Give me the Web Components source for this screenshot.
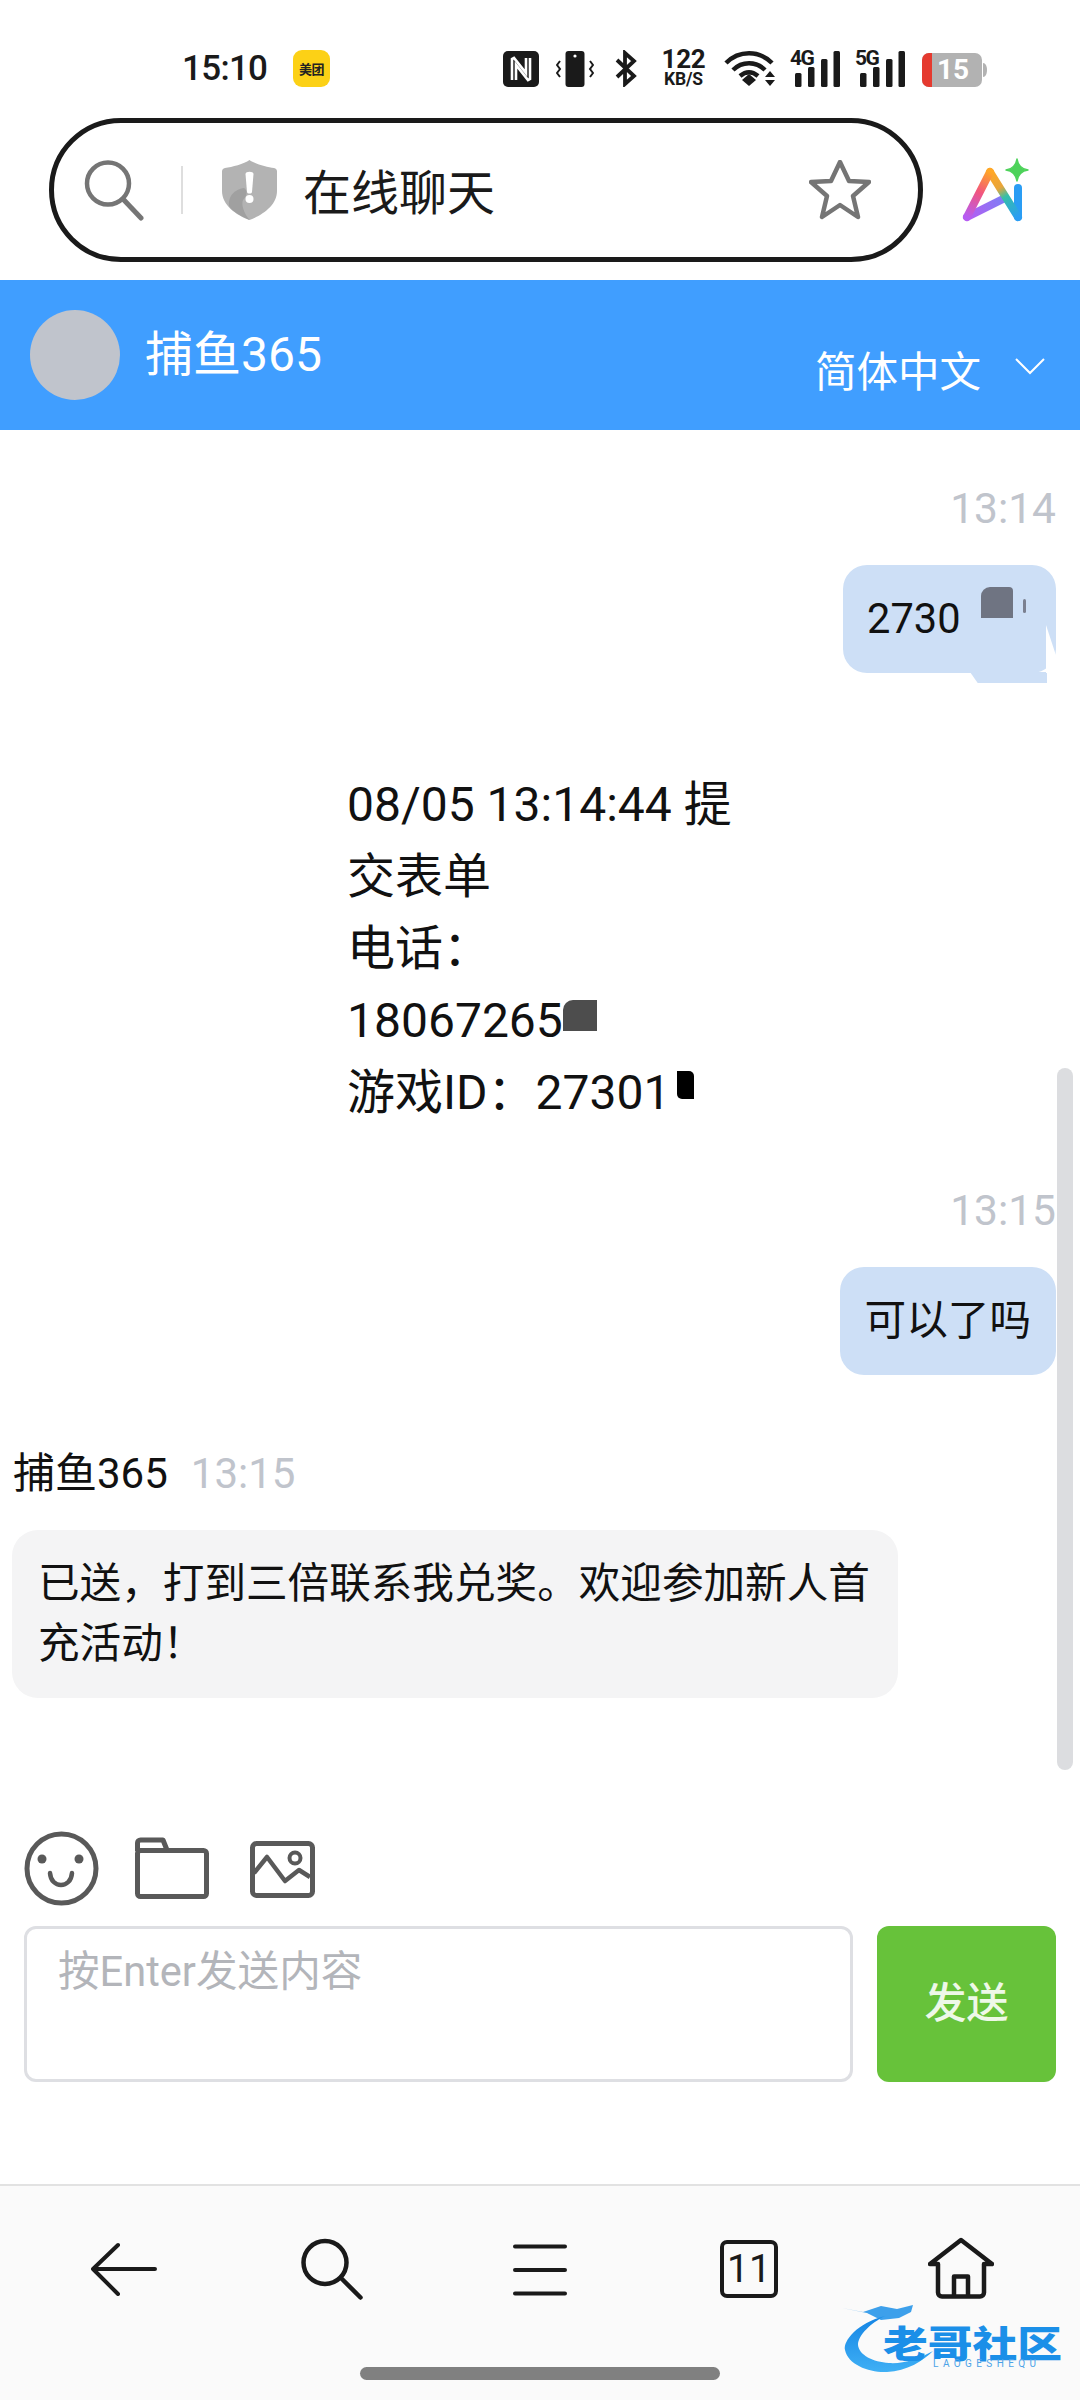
<!DOCTYPE html>
<html lang="zh">
<head>
<meta charset="utf-8">
<title>在线聊天</title>
<style>
  html, body { margin: 0; background: #fff; }
  body { width: 1080px; height: 2400px; overflow: hidden; display: flex; flex-direction: column;
         font-family: Roboto, "Noto Sans CJK SC", sans-serif; color: #111; }
</style>
</head>
<body>
<status-bar></status-bar>
<url-bar></url-bar>
<chat-header></chat-header>
<chat-log>
  <chat-time>13:14</chat-time>
  <chat-bubble side="me" redact="first">2730</chat-bubble>
  <form-note></form-note>
  <chat-time gap="58">13:15</chat-time>
  <chat-bubble side="me">可以了吗</chat-bubble>
  <chat-sender name="捕鱼365" time="13:15"></chat-sender>
  <chat-bubble side="them">已送，打到三倍联系我兑奖。欢迎参加新人首充活动！</chat-bubble>
</chat-log>
<chat-composer></chat-composer>
<bottom-nav></bottom-nav>

<script>
/* ---------- status bar ---------- */
const SIGNAL_BARS = `<svg width="50" height="37" viewBox="0 0 50 37">
  <rect x="5" y="23" width="6.5" height="14" rx="1.5" fill="#1a1a1a"/><rect x="18" y="17" width="6.5" height="20" rx="1.5" fill="#1a1a1a"/>
  <rect x="31" y="9" width="6.5" height="28" rx="1.5" fill="#1a1a1a"/><rect x="43.5" y="1" width="6.5" height="36" rx="1.5" fill="#1a1a1a"/></svg>`;

class StatusBar extends HTMLElement {
    constructor() {
        super();
        this.attachShadow({ mode: 'open' }).innerHTML = `
      <style>
        :host{display:flex;height:118px;box-sizing:border-box;padding:50px 0 0 182px;align-items:flex-start;color:#1a1a1a}
        .clock{font:500 35px/37px Roboto,sans-serif;width:111px;letter-spacing:-.7px}
        .mt{width:37px;height:37px;border-radius:9px;background:#fcd116;display:flex;align-items:center;justify-content:center;
            font:700 13px/1 "Noto Sans CJK SC",sans-serif;color:#222;letter-spacing:-.5px}
        .right{margin-left:173px;display:flex;align-items:flex-start;height:37px}
        svg{display:block}
        .net{width:45px;margin:0 18px 0 24px;text-align:center}
        .net b{display:block;font:700 26px/21px Roboto,sans-serif;letter-spacing:-.3px;margin-top:-1px}
        .net i{display:block;font:700 17.5px/17px Roboto,sans-serif;font-style:normal;white-space:nowrap;letter-spacing:-.2px;margin-top:1px}
        .sig{position:relative;width:50px;height:37px}
        .sig span{position:absolute;left:0;top:-2px;font:700 21px/20px Roboto,sans-serif;letter-spacing:-1.5px}
        .sig svg{position:absolute;left:0;top:0}
        .batt{position:relative;width:65px;height:37px;margin-left:17px}
        .batt span{position:absolute;left:13px;top:5px;width:36px;text-align:center;font:700 28px/30px Roboto,sans-serif;color:#fff}
      </style>
      <div class="clock">15:10</div>
      <div class="mt">美团</div>
      <div class="right">
        <svg width="36" height="37" viewBox="0 0 36 37"><rect width="36" height="36" y="1" rx="5" fill="#1a1a1a"/><path d="M9 30V9l2-1 12 15V8M27 8v21l-2 1-12-15v15" fill="none" stroke="#fff" stroke-width="2.6"/></svg>
        <svg width="38" height="37" viewBox="0 0 38 37" style="margin-left:17px"><rect x="9.500" y="1" width="19" height="36" rx="3" fill="#1a1a1a"/><circle cx="19" cy="6" r="1.6" fill="#fff"/><path d="M4 11 1 15l3 4-3 4 3 4M34 11l3 4-3 4 3 4-3 4" fill="none" stroke="#1a1a1a" stroke-width="2"/></svg>
        <svg width="22" height="37" viewBox="0 0 22 37" style="margin-left:21px"><path d="M2 10 19 26 10 34V3l9 8L2 27" fill="none" stroke="#1a1a1a" stroke-width="3.8"/></svg>
        <div class="net"><b>122</b><i>KB/S</i></div>
        <svg width="52" height="37" viewBox="0 0 52 37"><path d="M2 13C15 0 35 0 48 13M9 20C18 11 32 11 41 20M16 26c6-5 12-5 18 0" fill="none" stroke="#1a1a1a" stroke-width="4.500"/><path d="M18 30 25 24 32 30 25 36z" fill="#1a1a1a"/><path d="M41 27l5-6 5 6zM41 30h10l-5 6z" fill="#1a1a1a"/></svg>
        <div class="sig" style="margin-left:14px"><span>4G</span>${SIGNAL_BARS}</div>
        <div class="sig" style="margin-left:15px"><span>5G</span>${SIGNAL_BARS}</div>
        <div class="batt"><svg width="65" height="37" viewBox="0 0 65 37"><rect y="3" width="60" height="34" rx="7" fill="#b2b2b2"/><path d="M7 3h3v34H7a7 7 0 0 1-7-7V10a7 7 0 0 1 7-7z" fill="#e53a2f"/><path d="M61 13c2.500 0 4 3 4 7s-1.500 7-4 7z" fill="#b2b2b2"/></svg><span>15</span></div>
      </div>
    `;
    }
}
customElements.define('status-bar', StatusBar);

/* ---------- browser address bar ---------- */
class UrlBar extends HTMLElement {
    constructor() {
        super();
        this.attachShadow({ mode: 'open' }).innerHTML = `
      <style>
        :host{display:flex;align-items:flex-start;height:162px;padding-left:49px;box-sizing:border-box}
        .pill{width:874px;height:144px;box-sizing:border-box;border:5px solid #1a1a1a;border-radius:72px;
              display:flex;align-items:center;padding:0 0 0 30px}
        .sep{width:2px;height:48px;background:#dedede;margin:0 39px 0 37px}
        .title{font:400 48px/1 "Noto Sans CJK SC",sans-serif;color:#1a1a1a;margin:0 0 3px 26px;flex:1}
        svg{display:block}
        .star{margin-right:47px}
        .ai{margin:40px 0 0 38px}
      </style>
      <div class="pill">
        <svg width="60" height="62" viewBox="0 0 60 62"><circle cx="24" cy="24.500" r="21" fill="none" stroke="#757575" stroke-width="4.500"/><path d="M39 40 57 59" stroke="#757575" stroke-width="5" stroke-linecap="round"/></svg>
        <div class="sep"></div>
        <svg width="55" height="62" viewBox="0 0 55 62"><path d="M27.500 1C33 5 45 8 52 9c2 .4 3 1.500 3 3.500V32c0 14-14 24-27.500 29C14 56 0 46 0 32V12.500C0 10.500 1 9.400 3 9c7-1 19-4 24.500-8z" fill="#b3b3b3"/><path d="M7 47c-1-12 8-17 15-18 4 2 3 8-1 12-2 5 1 13 6.500 20C19 57 11 53 7 47z" fill="#a0a0a0"/><path d="M23.500 15c0-3 8-3 8 0l-1.500 18c-.3 2-4.700 2-5 0z" fill="#fff"/><circle cx="27.500" cy="40" r="4" fill="#fff"/></svg>
        <div class="title">在线聊天</div>
        <svg class="star" width="62" height="60" viewBox="0 0 62 60"><path d="M31 2 40 21 60 22 44 36 49 57 31 45 13 57 18 36 2 22 22 21z" fill="none" stroke="#757575" stroke-width="4.500" stroke-linejoin="round"/></svg>
      </div>
      <svg class="ai" width="70" height="68" viewBox="0 0 70 68">
        <defs>
          <linearGradient id="leg" gradientUnits="userSpaceOnUse" x1="29" y1="14" x2="6" y2="59"><stop offset="0" stop-color="#ffa726"/><stop offset=".45" stop-color="#f2557e"/><stop offset="1" stop-color="#b65cf2"/></linearGradient>
          <linearGradient id="bar" gradientUnits="userSpaceOnUse" x1="6" y1="59" x2="42" y2="41"><stop offset="0" stop-color="#b65cf2"/><stop offset="1" stop-color="#7f7df5"/></linearGradient>
          <linearGradient id="diag" gradientUnits="userSpaceOnUse" x1="29" y1="14" x2="57" y2="59"><stop offset="0" stop-color="#ffa726"/><stop offset=".35" stop-color="#e8a53a"/><stop offset=".55" stop-color="#35bfa8"/><stop offset="1" stop-color="#2a9df4"/></linearGradient>
        </defs>
        <path d="M6 59 42 41" fill="none" stroke="url(#bar)" stroke-width="8" stroke-linecap="round"/>
        <path d="M57 30V59" fill="none" stroke="#2a9df4" stroke-width="8" stroke-linecap="round"/>
        <path d="M29 14 57 59" fill="none" stroke="url(#diag)" stroke-width="8" stroke-linecap="round"/>
        <path d="M29 14 6 59" fill="none" stroke="url(#leg)" stroke-width="8" stroke-linecap="round"/>
        <path d="M56 1c1 6 4 10 11 11-7 1-10 5-11 11-1-6-4-10-11-11 7-1 10-5 11-11z" fill="#4dd25a" stroke="#4dd25a" stroke-width="1.500" stroke-linejoin="round"/>
      </svg>
    `;
    }
}
customElements.define('url-bar', UrlBar);

/* ---------- blue chat header ---------- */
class ChatHeader extends HTMLElement {
    constructor() {
        super();
        this.attachShadow({ mode: 'open' }).innerHTML = `
      <style>
        :host{display:flex;align-items:center;height:150px;background:#409eff;color:#fff;padding:0 35px 0 30px;box-sizing:border-box}
        .av{width:90px;height:90px;border-radius:50%;background:#c0c4cc}
        .name{font:400 48px/60px Roboto,"Noto Sans CJK SC",sans-serif;margin-left:25px;flex:1}
        .lang{display:flex;align-items:center;margin-top:28px;font:400 41.500px/56px "Noto Sans CJK SC",sans-serif}
        svg{display:block;margin-left:34px;margin-bottom:6px}
      </style>
      <div class="av"></div>
      <div class="name">捕鱼365</div>
      <div class="lang">简体中文<svg width="30" height="17" viewBox="0 0 30 17"><path d="M1 1 15 15 29 1" fill="none" stroke="#fff" stroke-width="2"/></svg></div>
    `;
    }
}
customElements.define('chat-header', ChatHeader);

/* ---------- scrolling message list ---------- */
class ChatLog extends HTMLElement {
    constructor() {
        super();
        this.attachShadow({ mode: 'open' }).innerHTML = `
      <style>
        :host{display:flex;flex-direction:column;position:relative;height:1370px;box-sizing:border-box;padding-top:55px;overflow:hidden}
        /* scroll thumb sits over the list */
        .thumb{position:absolute;left:1057px;top:638px;width:16px;height:702px;border-radius:8px;background:#dcdde0}
      </style>
      <slot></slot>
      <div class="thumb"></div>
    `;
    }
}
customElements.define('chat-log', ChatLog);

class ChatTime extends HTMLElement {
    constructor() {
        super();
        this.attachShadow({ mode: 'open' }).innerHTML = `
      <style>
        :host{display:block;text-align:right;padding-right:24px;font:400 42.500px/48px Roboto,sans-serif;color:#c0c4cc}
      </style>
      <slot></slot>
    `;
    }
    connectedCallback() {
        const gap = this.getAttribute('gap');
        if (gap) this.style.marginTop = gap + 'px';
    }
}
customElements.define('chat-time', ChatTime);

class ChatBubble extends HTMLElement {
    constructor() {
        super();
        this.attachShadow({ mode: 'open' }).innerHTML = `
      <style>
        :host{display:flex;font:400 41.600px/60px Roboto,"Noto Sans CJK SC",sans-serif;color:#111}
        :host([side=me]){justify-content:flex-end;padding-right:24px;margin-top:32px}
        :host([side=them]){padding-left:12px;margin-top:32px}
        .b{position:relative;box-sizing:border-box;padding:24px 25px;border-radius:24px}
        :host([side=me]) .b{background:#cddff6}
        :host([side=them]) .b{background:#f4f4f5;width:886px;border-radius:26px;padding:24px 26px}
        :host([redact]) .b{width:213px;padding-left:24px}
        i{display:none;position:absolute}
        /* retouched patches on the first bubble */
        :host([redact]) i{display:block}
        .smear{left:127px;top:107px;width:77px;height:11px;background:#cddff6;clip-path:polygon(0 0,100% 0,100% 100%,10% 100%)}
        .wedge{left:203px;top:60px;width:11px;height:48px;background:#fff;clip-path:polygon(0 0,100% 70%,100% 100%,0 100%)}
        .blot{left:138px;top:22px;width:32px;height:31px;background:#6f7482;border-radius:9px 4px 0 0}
        .speck{left:180px;top:34px;width:3px;height:14px;background:#7b8090;border-radius:2px}
      </style>
      <div class="b"><slot></slot><i class="smear"></i><i class="wedge"></i><i class="blot"></i><i class="speck"></i></div>
    `;
    }
}
customElements.define('chat-bubble', ChatBubble);

/* ---------- submitted form text ---------- */
class FormNote extends HTMLElement {
    constructor() {
        super();
        this.attachShadow({ mode: 'open' }).innerHTML = `
      <style>
        :host{display:block;width:400px;margin:96px 0 0 347px;font:400 48px/72px Roboto,"Noto Sans CJK SC",sans-serif;color:#111}
        .r{position:relative}
        .a{position:absolute;left:100%;top:8px;margin-left:0;width:34px;height:31px;background:#4d4d4d;border-radius:10px 0 0 0}
        .c{position:absolute;left:100%;top:7px;margin-left:7px;width:17px;height:28px;background:#000;border-radius:0 5px 0 5px}
      </style>
      08/05 13:14:44 提交表单<br>电话：<br><span class="r">18067265<i class="a"></i></span><br>游戏ID：<span class="r">27301<i class="c"></i></span>
    `;
    }
}
customElements.define('form-note', FormNote);

class ChatSender extends HTMLElement {
    constructor() {
        super();
        this.attachShadow({ mode: 'open' }).innerHTML = `
      <style>
        :host{display:flex;margin:75px 0 0 13px;font:400 42px/48px Roboto,"Noto Sans CJK SC",sans-serif;color:#111}
        .t{margin-left:23px;color:#c0c4cc}
      </style>
      <span id="n"></span><span class="t" id="t"></span>
    `;
    }
    connectedCallback() {
        this.shadowRoot.getElementById('n').textContent = this.getAttribute('name');
        this.shadowRoot.getElementById('t').textContent = this.getAttribute('time');
    }
}
customElements.define('chat-sender', ChatSender);

/* ---------- composer ---------- */
class ChatComposer extends HTMLElement {
    constructor() {
        super();
        this.attachShadow({ mode: 'open' }).innerHTML = `
      <style>
        :host{display:block;height:384px;box-sizing:border-box;padding:32px 24px 0 24px}
        .tools{display:flex;align-items:center;height:73px;gap:35px}
        svg{display:block}
        .row{display:flex;gap:24px;margin-top:21px;height:156px}
        .box{flex:1;box-sizing:border-box;border:3px solid #dedfe3;border-radius:12px;padding:15px 31px;
             font:400 41.600px/56px Roboto,"Noto Sans CJK SC",sans-serif;color:#b3b5ba}
        .send{width:179px;box-sizing:border-box;padding-bottom:8px;border-radius:12px;background:#67c23a;color:#eef8e8;display:flex;align-items:center;justify-content:center;
              font:500 42px/1 "Noto Sans CJK SC",sans-serif}
      </style>
      <div class="tools">
        <svg width="75" height="75" viewBox="0 0 75 75"><circle cx="37.500" cy="37.500" r="34.500" fill="none" stroke="#595959" stroke-width="5"/><circle cx="18" cy="28" r="4.500" fill="#595959"/><circle cx="55" cy="28" r="4.500" fill="#595959"/><path d="M26 42c1 16 21 16 22 0" fill="none" stroke="#595959" stroke-width="4.500" stroke-linecap="round"/></svg>
        <svg width="75" height="63" viewBox="0 0 75 63"><rect x="3.500" y="13.500" width="69" height="46" rx="3" fill="none" stroke="#595959" stroke-width="5"/><path d="M3.500 14V6a3 3 0 0 1 3-3H29l4 10" fill="none" stroke="#595959" stroke-width="5" stroke-linejoin="round"/></svg>
        <svg width="66" height="58" viewBox="0 0 66 58" style="margin-left:5px"><rect x="3.500" y="3.500" width="60" height="52" rx="4" fill="none" stroke="#595959" stroke-width="5"/><path d="M5 33 18 17 36 41 50 30 61 37" fill="none" stroke="#595959" stroke-width="4.500" stroke-linejoin="round"/><circle cx="46" cy="18" r="5.500" fill="none" stroke="#595959" stroke-width="4"/></svg>
      </div>
      <div class="row">
        <div class="box">按Enter发送内容</div>
        <div class="send">发送</div>
      </div>
    `;
    }
}
customElements.define('chat-composer', ChatComposer);

/* ---------- browser bottom bar ---------- */
class BottomNav extends HTMLElement {
    constructor() {
        super();
        this.attachShadow({ mode: 'open' }).innerHTML = `
      <style>
        :host{display:block;position:relative;height:216px;box-sizing:border-box;background:#fafafa;border-top:2px solid #e2e2e2}
        .icons{display:grid;grid-template-columns:208px 208px 208px 210px 214px;align-items:center;justify-items:center;height:64px;margin-top:51px;padding-left:20px}
        svg{display:block}
        .tab{box-sizing:border-box;width:58px;height:58px;border:4.500px solid #1a1a1a;border-radius:7px;
             display:flex;align-items:center;justify-content:center;font:400 39px/1 Roboto,sans-serif;color:#1a1a1a}
        .pill{position:absolute;left:360px;top:181px;width:360px;height:13px;border-radius:7px;background:#808080}
        .mark{position:absolute;left:845px;top:117px;width:218px;height:76px}
        .mark svg{position:absolute;left:0;top:0;overflow:visible}
        .mark b{position:absolute;left:38px;top:16px;font:900 37px/46px "Noto Sans CJK SC",sans-serif;white-space:nowrap;color:#1b8fe8;
                transform:scaleX(1.21);transform-origin:0 50%}
        .mark i{position:absolute;left:88px;top:55px;font:400 10px/12px Roboto,sans-serif;font-style:normal;letter-spacing:4.4px;color:#4da3e8}
      </style>
      <div class="icons">
        <svg width="66" height="54" viewBox="0 0 66 54"><path d="M27 3 2 27 27 52M2 27H64" fill="none" stroke="#1a1a1a" stroke-width="4" stroke-linecap="round" stroke-linejoin="round"/></svg>
        <svg width="62" height="64" viewBox="0 0 62 64"><circle cx="24" cy="25.500" r="21.500" fill="none" stroke="#1a1a1a" stroke-width="4.500"/><path d="M41 42 59.500 60.500" stroke="#1a1a1a" stroke-width="4.500" stroke-linecap="round"/></svg>
        <svg width="54" height="56" viewBox="0 0 54 56"><path d="M2 5.500H52M2 29H52M2 52.500H52" stroke="#1a1a1a" stroke-width="4" stroke-linecap="round"/></svg>
        <div class="tab">11</div>
        <svg width="66" height="64" viewBox="0 0 66 64"><path d="M2 27 33 3 64 27H56V55.500a4 4 0 0 1-4 4H14a4 4 0 0 1-4-4V27H2zM26 59V39.500H40V59" fill="none" stroke="#1a1a1a" stroke-width="4.500" stroke-linejoin="round"/></svg>
      </div>
      <div class="pill"></div>
      <div class="mark">
        <svg width="218" height="76" viewBox="0 0 218 76"><defs><linearGradient id="dr" x1="0" y1="0" x2="0" y2="1"><stop offset="0" stop-color="#1484e4"/><stop offset="1" stop-color="#3fb0f5"/></linearGradient></defs><path d="M40 13C12 20-2 38 0 47c3 15 25 23 42 22 20-1 36-11 46-21-14 8-30 13-44 12C28 59 14 52 13 42c0-10 13-22 27-29z" fill="url(#dr)"/><path d="M-3 5 18 9 36 3 52 6 68 2 66 9 54 15 36 17 22 10z" fill="#1b8fe8" opacity=".85"/></svg>
        <b>老哥社区</b><i>LAOGESHEQU</i>
      </div>
    `;
    }
}
customElements.define('bottom-nav', BottomNav);
</script>
</body>
</html>
